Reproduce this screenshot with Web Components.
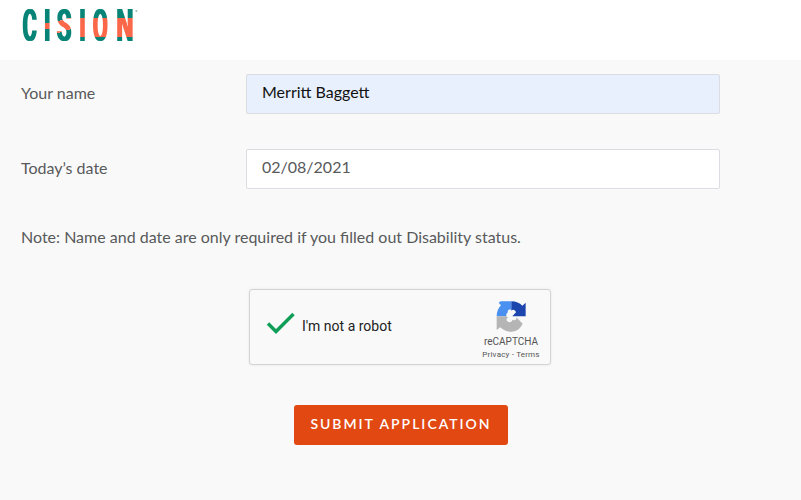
<!DOCTYPE html>
<html lang="en"><head><meta charset="utf-8"><title>Application</title>
<style>html,body{margin:0;height:100%;background:#f9f9f9;overflow:hidden}</style></head>
<body><application-page></application-page>
<script>
const define=(name,html)=>{const t=document.createElement('template');t.innerHTML=html;
customElements.define(name,class extends HTMLElement{constructor(){super();this.attachShadow({mode:'open'}).append(t.content.cloneNode(true))}})};

define('brand-header',`<style>:host{display:block;height:60px;background:#fff}svg{display:block;font:500 44px Roboto,sans-serif}</style>
<svg width="160" height="60" viewBox="0 0 160 60" role="img" aria-label="Cision">
<defs>
<filter id="wide" filterUnits="userSpaceOnUse" x="0" y="0" width="160" height="60" color-interpolation-filters="sRGB"><feMorphology operator="dilate" radius="1 0"/></filter>
<linearGradient id="s" gradientUnits="userSpaceOnUse" x1="0" y1="-31" x2="5" y2="0"><stop offset=".36" stop-color="#078477"/><stop offset=".36" stop-color="#fa6749"/><stop offset=".72" stop-color="#fa6749"/><stop offset=".72" stop-color="#078477"/></linearGradient>
<linearGradient id="e" gradientUnits="userSpaceOnUse" x1="0" y1="-31" x2="0" y2="0"><stop offset=".24" stop-color="#078477"/><stop offset=".24" stop-color="#fa6749"/><stop offset=".86" stop-color="#fa6749"/><stop offset=".86" stop-color="#078477"/></linearGradient>
<linearGradient id="i" gradientUnits="userSpaceOnUse" x1="0" y1="-31" x2="0" y2="0"><stop offset=".4" stop-color="#078477"/><stop offset=".4" stop-color="#fa6749"/><stop offset=".6" stop-color="#fa6749"/><stop offset=".6" stop-color="#078477"/></linearGradient>
</defs>
<g filter="url(#wide)">
<text transform="translate(22.8 41.3) scale(.48 1)" fill="#078477">C</text>
<text transform="translate(44.2 41.3) scale(.48 1)" fill="url(#i)">I</text>
<text transform="translate(57.1 41.3) scale(.53 1)" fill="url(#s)">S</text>
<text transform="translate(79.6 41.3) scale(.48 1)" fill="url(#e)">I</text>
<text transform="translate(93 41.3) scale(.48 1)" fill="url(#e)">O</text>
<text transform="translate(116.4 41.3) scale(.54 1)" fill="url(#e)">N</text></g>
<circle cx="136.3" cy="11" r="1" fill="#8fbdb8"/>
</svg>`);

define('form-field',`<style>:host{display:grid;grid-template-columns:225px 474px;height:40px;font:16px/20px Lato,sans-serif;color:#58595b}
label{padding-top:9px}.box{box-sizing:border-box;height:40px;border:1px solid #dcdde2;border-radius:2px;background:#fff;padding:7px 15px}
:host([filled]) .box{background:#e8f0fe;color:#111}</style><label><slot name="label"></slot></label><div class="box"><slot></slot></div>`);

define('robot-check',`<style>:host{box-sizing:border-box;display:flex;width:302px;height:76px;border:1px solid #d3d3d3;border-radius:3px;background:#f9f9f9;box-shadow:0 0 3px rgba(0,0,0,.08);font-family:Roboto,sans-serif;color:#222}
.check{margin:22px 0 0 16px;width:30px;height:24px}.label{margin:27px 0 0 6px;font-size:14px;line-height:18px;width:174px}
.brand{width:70px;display:flex;flex-direction:column;align-items:center;color:#555;padding-top:11px}
.name{font-size:10px;line-height:12px;margin-top:3px}.links{font-size:8px;line-height:10px;margin-top:2px;white-space:nowrap;letter-spacing:.2px}</style>
<svg class="check" viewBox="0 0 30 24"><path d="M2 11.5 10 19.5 27.5 2" fill="none" stroke="#0f9d58" stroke-width="3.4"/></svg>
<div class="label">I'm not a robot</div>
<div class="brand"><svg width="32" height="32" viewBox="15 15 96 96">
<path fill="#4a90f0" d="M32 16 L64 16 V42 C57 38 51 44 54 49 C50 51 48 56 49 61 L20 61 C20 47 25 36 33 28 L26 20Z"/>
<path fill="#1c45ae" d="M64 16 C78 16 89 21 97 29 L107 20 V61 H67 L78 49 C76 42 69 39 64 44Z"/>
<path fill="#b5b5b5" d="M20 61 H49 L54 64 C47 69 49 78 57 78 C62 80 66 76 67 71 C73 76 81 71 79 64 L98 83 C91 98 79 107 63 107 C50 107 39 102 31 94 L20 102Z"/></svg>
<div class="name">reCAPTCHA</div><div class="links">Privacy - Terms</div></div>`);

define('submit-button',`<style>:host{display:block}button{display:block;width:214px;height:40px;border:0;border-radius:3px;background:#e24912;color:#fff;font:600 14px/38px Lato,sans-serif;letter-spacing:1.98px;padding:0 0 2px;white-space:nowrap}</style><button><slot></slot></button>`);

define('application-page',`<style>:host{display:block;height:500px;background:#f9f9f9;font:16px/20px Lato,sans-serif;color:#58595b}
main{display:flex;flex-direction:column;padding:14px 0 0 21px}.date{margin-top:35px}.note{margin:38px 0 0;height:20px}
robot-check{margin:42px 0 0 228px}submit-button{margin:40px 0 0 273px}</style>
<brand-header></brand-header><main>
<form-field filled><span slot="label">Your name</span>Merritt Baggett</form-field>
<form-field class="date"><span slot="label">Today’s date</span>02/08/2021</form-field>
<p class="note">Note: Name and date are only required if you filled out Disability status.</p>
<robot-check></robot-check><submit-button>SUBMIT APPLICATION</submit-button></main>`);
</script></body></html>
